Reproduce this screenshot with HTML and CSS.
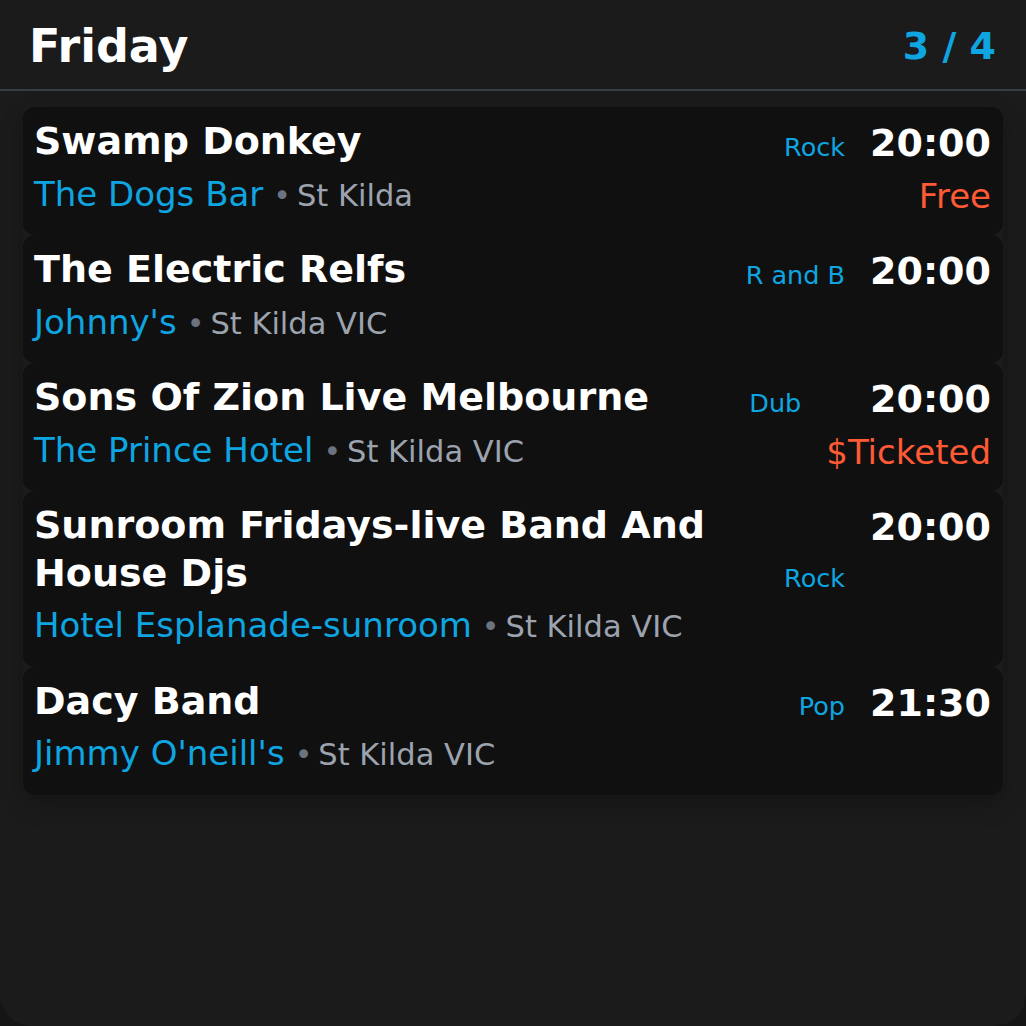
FILE: index.html
```html
<!DOCTYPE html>
<html lang="en">
<head>
<meta charset="utf-8">
<title>Friday gigs</title>
<link rel="stylesheet" href="styles.css">
</head>
<body>
<div class="screen">
  <header class="header">
    <h1 class="day">Friday</h1>
    <div class="pager">3 / 4</div>
  </header>
  <div class="list">
    <div class="card">
      <div class="main">
        <div class="top"><div class="title">Swamp Donkey</div><div class="genre">Rock</div></div>
        <div class="where"><span class="venue">The Dogs Bar</span><span class="dot">•</span><span class="suburb">St Kilda</span></div>
      </div>
      <div class="side"><div class="time">20:00</div><div class="price">Free</div></div>
    </div>
    <div class="card">
      <div class="main">
        <div class="top"><div class="title">The Electric Relfs</div><div class="genre">R and B</div></div>
        <div class="where"><span class="venue">Johnny's</span><span class="dot">•</span><span class="suburb">St Kilda VIC</span></div>
      </div>
      <div class="side"><div class="time">20:00</div></div>
    </div>
    <div class="card">
      <div class="main">
        <div class="top"><div class="title">Sons Of Zion Live Melbourne</div><div class="genre">Dub</div></div>
        <div class="where"><span class="venue">The Prince Hotel</span><span class="dot">•</span><span class="suburb">St Kilda VIC</span></div>
      </div>
      <div class="side"><div class="time">20:00</div><div class="price">$Ticketed</div></div>
    </div>
    <div class="card">
      <div class="main">
        <div class="top"><div class="title">Sunroom Fridays-live Band And House Djs</div><div class="genre">Rock</div></div>
        <div class="where"><span class="venue">Hotel Esplanade-sunroom</span><span class="dot">•</span><span class="suburb">St Kilda VIC</span></div>
      </div>
      <div class="side"><div class="time">20:00</div></div>
    </div>
    <div class="card">
      <div class="main">
        <div class="top"><div class="title">Dacy Band</div><div class="genre">Pop</div></div>
        <div class="where"><span class="venue">Jimmy O'neill's</span><span class="dot">•</span><span class="suburb">St Kilda VIC</span></div>
      </div>
      <div class="side"><div class="time">21:30</div></div>
    </div>
  </div>
</div>
</body>
</html>
```

FILE: styles.css
```css
* { box-sizing: border-box; }

html, body {
  margin: 0;
  padding: 0;
  height: 100%;
}

body {
  background: #151515;
  font-family: "DejaVu Sans", sans-serif;
  color: #ffffff;
}

.screen {
  height: 1026px;
  background: #1b1b1b;
  border-radius: 0 0 32px 32px;
  overflow: hidden;
}

.header {
  height: 91px;
  padding: 3px 30px 0 29px;
  display: flex;
  align-items: center;
  justify-content: space-between;
  border-bottom: 2px solid #363c48;
}

.day {
  margin: 0;
  font-size: 46px;
  font-weight: 700;
  line-height: 1;
  color: #ffffff;
}

.pager {
  font-size: 38px;
  font-weight: 700;
  line-height: 1;
  color: #0ea5e0;
}

.list {
  margin: 16px 23px 0;
  display: flex;
  flex-direction: column;
  border-radius: 12px;
  box-shadow: 0 10px 24px rgba(0, 0, 0, 0.22);
}

.card {
  display: flex;
  gap: 25px;
  padding: 11px 12px 16.6px 11px;
  background: #101010;
  border-radius: 12px;
}

.main {
  flex: 1;
  min-width: 0;
}

.top {
  display: flex;
  align-items: flex-end;
  gap: 20px;
}

.title {
  flex: 1;
  font-size: 38px;
  font-weight: 700;
  line-height: 47.5px;
  color: #ffffff;
}

.genre {
  flex-shrink: 0;
  font-size: 25.5px;
  line-height: 37px;
  color: #0ea5e0;
}

.where {
  margin-top: 4px;
  font-size: 34px;
  line-height: 49px;
  white-space: nowrap;
}

.venue {
  font-size: 34px;
  line-height: 1;
  color: #0ea5e0;
}

.dot {
  font-size: 30px;
  line-height: 1;
  color: #6b7280;
  margin: 0 6px 0 10px;
}

.suburb {
  font-size: 30.5px;
  line-height: 1;
  color: #9ca3af;
}

.side {
  flex-shrink: 0;
  padding-top: 2px;
  text-align: right;
}

.time {
  font-size: 38px;
  font-weight: 700;
  line-height: 47.5px;
  color: #ffffff;
}

.price {
  margin-top: 5px;
  font-size: 34px;
  line-height: 46px;
  color: #ff5a36;
}
```
